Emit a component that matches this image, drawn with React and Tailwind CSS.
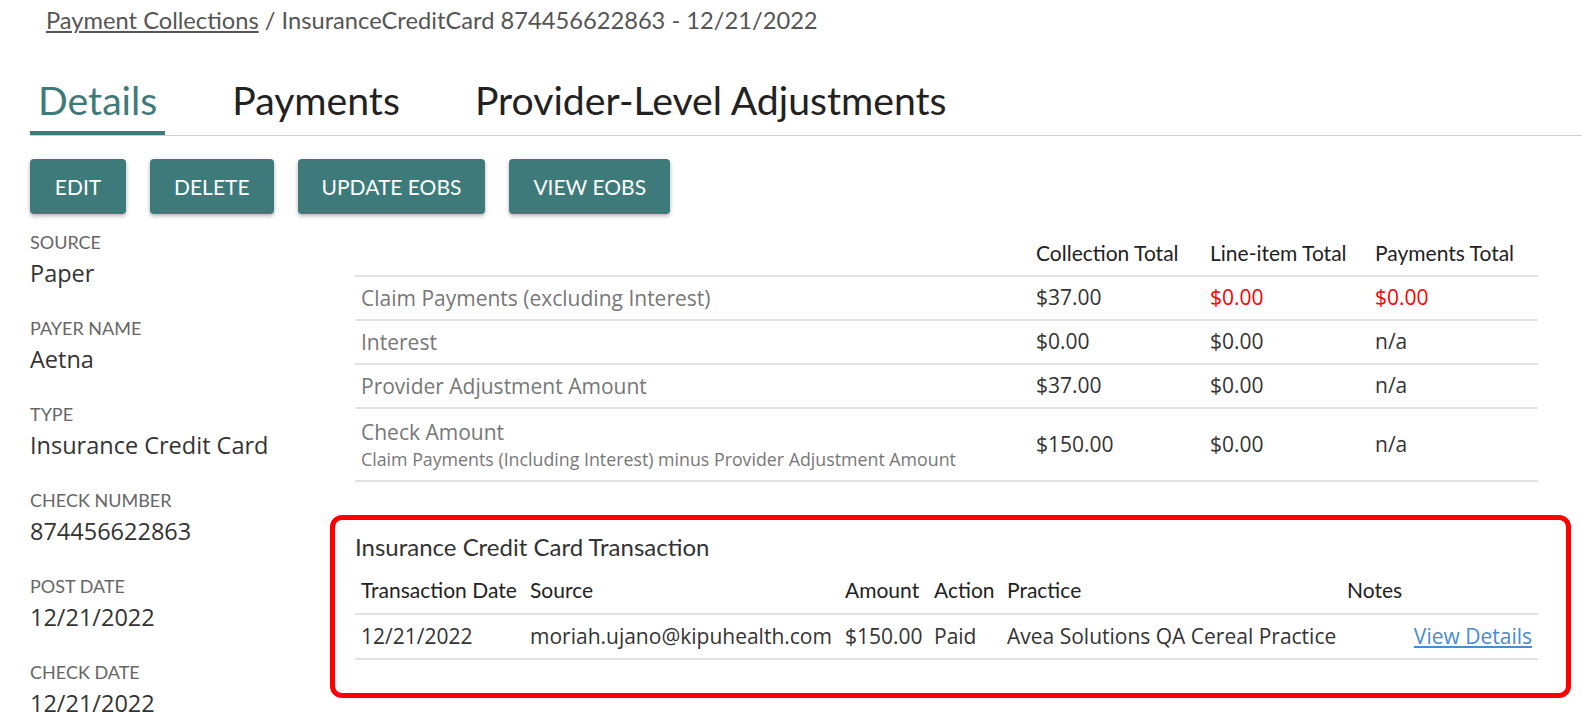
import React from "react"

const fields = [
  ["SOURCE", "Paper"],
  ["PAYER NAME", "Aetna"],
  ["TYPE", "Insurance Credit Card"],
  ["CHECK NUMBER", "874456622863"],
  ["POST DATE", "12/21/2022"],
  ["CHECK DATE", "12/21/2022"],
]

const totals = [
  { label: "Claim Payments (excluding Interest)", c: "$37.00", l: "$0.00", p: "$0.00", red: true },
  { label: "Interest", c: "$0.00", l: "$0.00", p: "n/a" },
  { label: "Provider Adjustment Amount", c: "$37.00", l: "$0.00", p: "n/a" },
  {
    label: "Check Amount",
    sub: "Claim Payments (Including Interest) minus Provider Adjustment Amount",
    c: "$150.00",
    l: "$0.00",
    p: "n/a",
  },
]

const buttons = ["EDIT", "DELETE", "UPDATE EOBS", "VIEW EOBS"]

export default function App() {
  const open = "font-['Open_Sans',sans-serif]"
  const cols = "grid grid-cols-[675px_174px_165px_1fr]"
  const txCols = "grid grid-cols-[169px_315px_89px_73px_340px_1fr]"

  return (
    <div className="min-h-screen bg-white font-['Lato',sans-serif] text-[#333]">
      {/* breadcrumb */}
      <div className="pl-[46px] pt-[5px] text-[23.7px] leading-[30px] text-[#555]">
        <a href="#" className="underline underline-offset-2">Payment Collections</a>
        <span> / InsuranceCreditCard 874456622863 - 12/21/2022</span>
      </div>

      {/* tabs */}
      <div className="ml-[30px] mt-[42px] flex gap-[59px] border-b border-[#cfcfcf]">
        <div className="border-b-4 border-[#3e7a7a] px-2 pb-[8px] text-[39.2px] leading-[46px] text-[#3e7a7a]">Details</div>
        <div className="px-2 pb-[12px] text-[39.2px] leading-[46px] text-[#222]">Payments</div>
        <div className="px-2 pb-[12px] text-[39.2px] leading-[46px] text-[#222]">Provider-Level Adjustments</div>
      </div>

      {/* actions */}
      <div className="ml-[30px] mt-[23px] flex gap-[24px]">
        {buttons.map((b) => (
          <button
            key={b}
            className="h-[55px] min-w-[96px] rounded-[4px] bg-[#3e7a7a] px-[24px] text-[21px] text-white shadow-[0_2px_4px_rgba(0,0,0,0.3)]"
          >
            {b}
          </button>
        ))}
      </div>

      <div className="mt-[17px] flex">
        {/* left details */}
        <div className="w-[330px] shrink-0 pl-[30px]">
          {fields.map(([k, v]) => (
            <div key={k} className="mb-[29px]">
              <div className="text-[18px] leading-[22px] text-[#666]">{k}</div>
              <div className={`mt-[5px] text-[23.5px] leading-[30px] text-[#333] ${open}`}>{v}</div>
            </div>
          ))}
        </div>

        {/* right */}
        <div className="flex-1 pr-[11px]">
          <div className="ml-[25px] mr-[33px]">
            <div className={`${cols} h-[46px] items-center border-b-2 border-[#e2e2e2] text-[21px] text-[#222]`}>
              <div />
              <div className="pl-[6px]">Collection Total</div>
              <div className="pl-[6px]">Line-item Total</div>
              <div className="pl-[6px]">Payments Total</div>
            </div>
            {totals.map((r) => (
              <div
                key={r.label}
                className={`${cols} ${r.sub ? "h-[73px]" : "h-[44px]"} items-center border-b-2 border-[#e2e2e2] text-[21px] ${open}`}
              >
                <div className="pl-[6px] text-[#777]">
                  <div className="leading-[28px]">{r.label}</div>
                  {r.sub && <div className="text-[17.8px] leading-[26px]">{r.sub}</div>}
                </div>
                <div className="pl-[6px] text-[#333]">{r.c}</div>
                <div className={`pl-[6px] ${r.red ? "text-[#ff0000]" : "text-[#333]"}`}>{r.l}</div>
                <div className={`pl-[6px] ${r.red ? "text-[#ff0000]" : "text-[#333]"}`}>{r.p}</div>
              </div>
            ))}
          </div>

          {/* transaction card */}
          <div className="mt-[33px] rounded-[12px] border-[5px] border-[#ff0000] pb-[33px] pl-[20px] pr-[28px] pt-[12px]">
            <div className="text-[24px] leading-[30px] text-[#333]">Insurance Credit Card Transaction</div>
            <div className={`${txCols} mt-[4px] h-[49px] items-center border-b-2 border-[#e2e2e2] text-[21px] text-[#222]`}>
              <div className="pl-[6px]">Transaction Date</div>
              <div className="pl-[6px]">Source</div>
              <div className="pl-[6px]">Amount</div>
              <div className="pl-[6px]">Action</div>
              <div className="pl-[6px]">Practice</div>
              <div className="pl-[6px]">Notes</div>
            </div>
            <div className={`${txCols} h-[45px] items-center border-b-2 border-[#e2e2e2] text-[21px] text-[#333] ${open}`}>
              <div className="pl-[6px]">12/21/2022</div>
              <div className="pl-[6px]">moriah.ujano@kipuhealth.com</div>
              <div className="pl-[6px]">$150.00</div>
              <div className="pl-[6px]">Paid</div>
              <div className="pl-[6px] whitespace-nowrap">Avea Solutions QA Cereal Practice</div>
              <div className="pr-[6px] text-right">
                <a href="#" className="text-[#4a8bd0] underline underline-offset-2">View Details</a>
              </div>
            </div>
          </div>
        </div>
      </div>
    </div>
  )
}
